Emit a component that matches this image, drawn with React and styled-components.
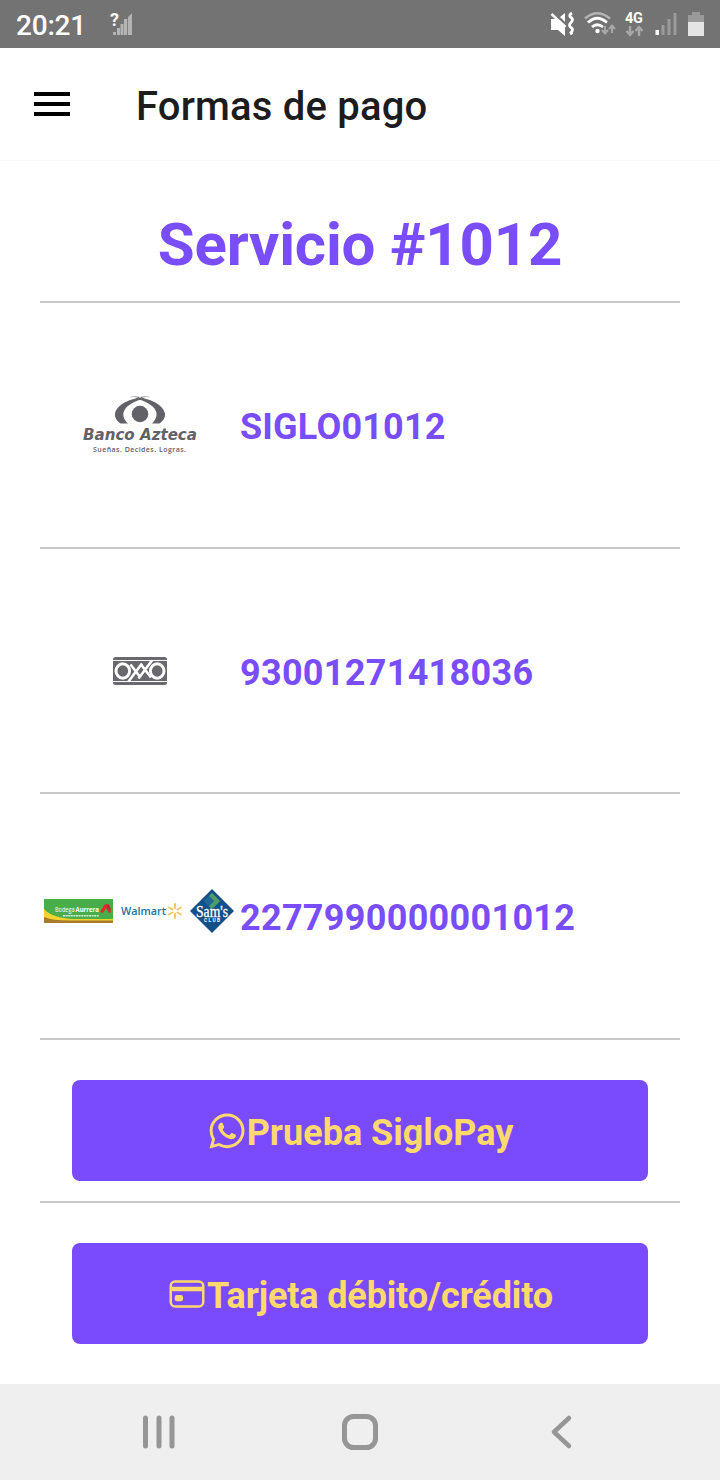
import React from 'react'
import styled, { createGlobalStyle } from 'styled-components'
import { IoLogoWhatsapp, IoCardOutline } from 'react-icons/io5'

const GlobalStyle = createGlobalStyle`
    * { box-sizing: border-box; }
    body {
        margin: 0;
        background: #ffffff;
        font-family: Roboto, 'Liberation Sans', sans-serif;
    }
`
const Screen = styled.div`
    width: 720px;
    height: 1480px;
    display: flex;
    flex-direction: column;
    overflow: hidden;
`
const StatusBar = styled.div`
    height: 48px;
    padding: 0 16px;
    display: flex;
    align-items: center;
    justify-content: space-between;
    background: #737373;
    color: #ffffff;
`
const StatusGroup = styled.div`
    display: flex;
    align-items: center;
    gap: ${props => props.$gap || 0}px;
`
const Clock = styled.span`
    font-size: 28px;
    font-weight: 500;
    line-height: 48px;
    letter-spacing: -0.2px;
    padding-top: 3px;
`
const Header = styled.header`
    height: 113px;
    padding: 0 34px;
    display: flex;
    align-items: center;
    gap: 66px;
    border-bottom: 1px solid #f8f8f8;
`
const MenuButton = styled.button`
    width: 36px;
    height: 24px;
    padding: 0;
    border: none;
    background: none;
    display: flex;
    flex-direction: column;
    justify-content: space-between;
`
const MenuLine = styled.span`
    height: 4px;
    width: 100%;
    background: #000000;
`
const HeaderTitle = styled.h1`
    margin: 0;
    padding-top: 4px;
    font-size: 40px;
    font-weight: 500;
    letter-spacing: 0.2px;
    color: #1c1c1e;
`
const Content = styled.main`
    flex: 1;
    padding: 0 40px;
`
const ServiceTitle = styled.h2`
    margin: 0;
    height: 142px;
    padding-top: 26px;
    border-bottom: 2px solid #c8c8c8;
    font-size: 60px;
    font-weight: 700;
    line-height: 116px;
    letter-spacing: -0.2px;
    text-align: center;
    color: #7a4dfb;
`
const PayRow = styled.div`
    height: ${props => props.$height}px;
    display: flex;
    align-items: center;
    border-bottom: 2px solid #c8c8c8;
`
const LogoCell = styled.div`
    width: 200px;
    display: flex;
    align-items: center;
    justify-content: center;
    gap: ${props => props.$gap || 0}px;
    padding: ${props => props.$pad || 0};
`
const Reference = styled.span`
    font-size: 36px;
    font-weight: 700;
    letter-spacing: ${props => props.$spacing || 0.3}px;
    padding-top: 4px;
    color: #7a4dfb;
`
const ActionRow = styled.div`
    padding: 40px 32px 20px;
    border-bottom: ${props => (props.$last ? 'none' : '2px solid #c8c8c8')};
`
const ActionButton = styled.button`
    width: 100%;
    height: 101px;
    border: none;
    border-radius: 8px;
    background: #7a4bfd;
    color: #ffd96b;
    display: flex;
    align-items: center;
    justify-content: center;
    font-family: inherit;
    font-size: 36px;
    font-weight: 700;
    letter-spacing: ${props => props.$spacing || 0}px;

    svg {
        font-size: 40px;
        flex: none;
    }
`
const ActionLabel = styled.span`
    padding-top: 4px;
`
const NavBar = styled.nav`
    height: 96px;
    background: #efefef;
    display: flex;
    align-items: center;
    justify-content: space-between;
    padding: 0 138px;
`

const NoSignal = () => (
    <svg width="24" height="26" viewBox="0 0 24 26" overflow="visible">
        <g fill="#b4b4b4">
            <rect x="3" y="21" width="3" height="3" />
            <rect x="7" y="17" width="3" height="7" />
            <rect x="10.500" y="13" width="3" height="11" />
            <rect x="14" y="8" width="3.200" height="16" />
            <path d="M18 6l4-4v22h-4z" />
        </g>
        <text x="0" y="15" fontSize="18" fontWeight="700" fill="#fff" stroke="#737373" strokeWidth="2" paintOrder="stroke">?</text>
    </svg>
)

const Muted = () => (
    <svg width="24" height="26" viewBox="0 0 24 26" fill="none">
        <path d="M1 8h5l9 8v9l-7-6H1z" fill="#fff" />
        <path d="M10 6l5-4v9z" fill="#fff" />
        <path d="M1.500 3l14 13" stroke="#fff" strokeWidth="2.400" />
        <path d="M22 2q-4 2.500-1 4.500t0 5t0 5t0 5l1 2" stroke="#fff" strokeWidth="2.800" />
    </svg>
)

const Wifi = () => (
    <svg width="32" height="26" viewBox="0 0 32 26" fill="none">
        <path d="M1 7.500Q13-3 26 7.500" stroke="#b4b4b4" strokeWidth="2.600" />
        <path d="M4 11.500Q13 3 23 11.500M8 16Q13 11.500 19 16" stroke="#fff" strokeWidth="2.800" />
        <circle cx="13.500" cy="20" r="2.200" fill="#fff" />
        <path d="M21 15v7M18 19l3 3.500 3-3.500M28 22v-7M25 18l3-3.500 3 3.500" stroke="#a8a8a8" strokeWidth="2" />
    </svg>
)

const Mobile4G = () => (
    <svg width="20" height="28" viewBox="0 0 20 28" fill="none">
        <text x="0" y="12.500" fontSize="14.500" fontWeight="700" fill="#fff" textLength="18">4G</text>
        <path d="M5 16v9M1.500 21l3.500 4 3.500-4M14 26v-9M10.500 21l3.500-4 3.500 4" stroke="#a8a8a8" strokeWidth="2.400" />
    </svg>
)

const Signal = () => (
    <svg width="24" height="26" viewBox="0 0 24 26">
        <rect x="0.500" y="19" width="3.500" height="5" fill="#fff" />
        <g fill="#9b9b9b">
            <rect x="6.500" y="14" width="3" height="10" />
            <rect x="12.500" y="8" width="3" height="16" />
            <rect x="18.500" y="2" width="3" height="22" />
        </g>
    </svg>
)

const Battery = () => (
    <svg width="16" height="24" viewBox="0 0 16 24">
        <path d="M4 0h8v3h4v7H0V3h4z" fill="#9a9a9a" />
        <path d="M0 10h16v14H0z" fill="#e4e4e4" />
    </svg>
)

const BancoAzteca = () => (
    <svg width="116" height="60" viewBox="0 0 116 60" fill="#626168" overflow="visible">
        <path d="M59 3C45 4 34 11 33 19c-.3 4 2 7 5.500 9.500H46C37 20 41 10 59 4.500z" />
        <path d="M57 3C71 4 82 11 83 19c.3 4-2 7-5.500 9.500H70C79 20 75 10 57 4.500z" />
        <path d="M47 2.200Q58-.5 69 7l-4-.8Q57 1 47 2.200M69 2.200Q58-.5 47 7l4-.8Q59 1 69 2.200" />
        <circle cx="58" cy="19" r="8.300" />
        <text x="1" y="45" fontFamily="DejaVu Sans, sans-serif" fontSize="15.500" fontWeight="700" fontStyle="italic" textLength="114" lengthAdjust="spacingAndGlyphs">Banco Azteca</text>
        <text x="11" y="56.500" fontFamily="Open Sans, sans-serif" fontSize="7" fontWeight="600" textLength="93">Sueñas. Decides. Logras.</text>
    </svg>
)

const Oxxo = () => (
    <svg width="54" height="28" viewBox="0 0 54 28" fill="none">
        <rect width="54" height="28" rx="2.500" fill="#69686e" />
        <path d="M0 3.500h54M0 24.500h54" stroke="#fff" strokeWidth="1.200" />
        <path d="M39 3.500L25.500 21.500M29 6.500L15.500 24.500M17.500 7.500l10 13M28 7.500l10 13" stroke="#fff" strokeWidth="2.600" />
        <ellipse cx="9.800" cy="14" rx="6.800" ry="7.200" stroke="#fff" strokeWidth="2.900" />
        <ellipse cx="44.200" cy="14" rx="6.800" ry="7.200" stroke="#fff" strokeWidth="2.900" />
    </svg>
)

const BodegaAurrera = () => (
    <svg width="69" height="24" viewBox="0 0 69 24">
        <rect width="69" height="24" fill="#49ae49" />
        <path d="M0 10Q8 19 30 20h39v4H0z" fill="#f2d32f" />
        <path d="M0 18Q8 21.500 25 21.500h44V24H0z" fill="#a67b2e" />
        <text x="11" y="13" fontFamily="Open Sans, sans-serif" fontSize="7.500" fill="#fff" textLength="19.500" lengthAdjust="spacingAndGlyphs">Bodega</text>
        <text x="31.500" y="13" fontFamily="Open Sans, sans-serif" fontSize="7.500" fontWeight="700" fill="#fff" textLength="23.500" lengthAdjust="spacingAndGlyphs">Aurrera</text>
        <path d="M19 16.800h36" stroke="#fff" strokeWidth="1.500" strokeDasharray="2 .6" opacity=".8" />
        <path d="M56 13l5-8 3 1 3 7-2 1-3-5-3 5z" fill="#df2931" />
        <path d="M62 5l3 .5 2 5-2 1z" fill="#c4262a" />
    </svg>
)

const Walmart = () => (
    <svg width="61" height="18" viewBox="0 0 61 18">
        <text x="0" y="13" fontFamily="Open Sans, sans-serif" fontSize="11.500" fontWeight="600" fill="#1c73a4" textLength="45" lengthAdjust="spacingAndGlyphs">Walmart</text>
        <path d="M54 6V2M54 12v4M51.500 7.500L48 5.500M56.500 7.500L60 5.500M51.500 10.500L48 12.500M56.500 10.500L60 12.500" stroke="#f8c569" strokeWidth="2" strokeLinecap="round" />
    </svg>
)

const SamsClub = () => (
    <svg width="44" height="44" viewBox="0 0 44 44">
        <path d="M22 0l22 22-22 22L0 22z" fill="#145087" />
        <path d="M22 4l8 8-8 8-8-8z" fill="#267b9d" />
        <path d="M22 4l8 8-8 8-3-3 5-5-5-5z" fill="#4f9d65" />
        <path d="M19 7l5 5-5 5-5-5z" fill="#1f6696" />
        <text x="6" y="27.500" fontFamily="Liberation Serif, serif" fontSize="16" fill="#fff" stroke="#fff" strokeWidth=".3" textLength="32" lengthAdjust="spacingAndGlyphs">Sam's</text>
        <text x="14" y="33" fontSize="4.800" fontWeight="700" fill="#fff" textLength="16">CLUB</text>
    </svg>
)

const App = () => {
    return (
        <Screen>
            <GlobalStyle />
            <StatusBar>
                <StatusGroup $gap={24}>
                    <Clock>20:21</Clock>
                    <NoSignal />
                </StatusGroup>
                <StatusGroup $gap={9.4}>
                    <Muted />
                    <Wifi />
                    <Mobile4G />
                    <Signal />
                    <Battery />
                </StatusGroup>
            </StatusBar>

            <Header>
                <MenuButton>
                    <MenuLine />
                    <MenuLine />
                    <MenuLine />
                </MenuButton>
                <HeaderTitle>Formas de pago</HeaderTitle>
            </Header>

            <Content>
                <ServiceTitle>Servicio #1012</ServiceTitle>

                <PayRow $height={246}>
                    <LogoCell>
                        <BancoAzteca />
                    </LogoCell>
                    <Reference $spacing={0.2}>SIGLO01012</Reference>
                </PayRow>
                <PayRow $height={245}>
                    <LogoCell>
                        <Oxxo />
                    </LogoCell>
                    <Reference>93001271418036</Reference>
                </PayRow>
                <PayRow $height={246}>
                    <LogoCell $gap={8} $pad="0 2px 10px 0">
                        <BodegaAurrera />
                        <Walmart />
                        <SamsClub />
                    </LogoCell>
                    <Reference>2277990000001012</Reference>
                </PayRow>

                <ActionRow>
                    <ActionButton>
                        <IoLogoWhatsapp />
                        <ActionLabel>Prueba SigloPay</ActionLabel>
                    </ActionButton>
                </ActionRow>
                <ActionRow $last>
                    <ActionButton $spacing={-0.15}>
                        <IoCardOutline />
                        <ActionLabel>Tarjeta débito/crédito</ActionLabel>
                    </ActionButton>
                </ActionRow>
            </Content>

            <NavBar>
                <svg width="40" height="40" viewBox="0 0 40 40" stroke="#969696" strokeWidth="5" strokeLinecap="round">
                    <path d="M7.500 6v28M21 6v28M34 6v28" />
                </svg>
                <svg width="40" height="40" viewBox="0 0 40 40" fill="none" stroke="#969696" strokeWidth="5">
                    <rect x="4.500" y="4.500" width="31" height="31" rx="9" />
                </svg>
                <svg width="40" height="40" viewBox="0 0 40 40" fill="none" stroke="#969696" strokeWidth="4.500" strokeLinecap="round" strokeLinejoin="round">
                    <path d="M27 6L12 20l15 14" />
                </svg>
            </NavBar>
        </Screen>
    )
}

export default App
